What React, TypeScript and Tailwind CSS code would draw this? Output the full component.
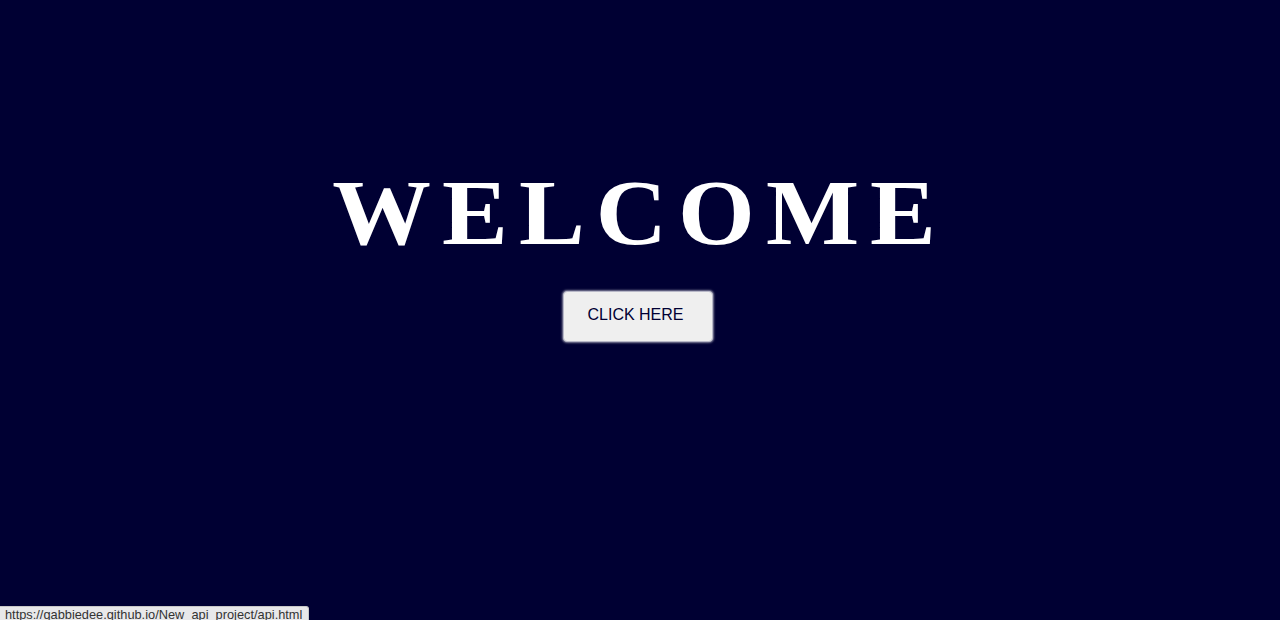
import React from "react";

export default function App() {
  return (
    <div className="relative h-[620px] w-full overflow-hidden bg-[#000033]">
      <div className="flex flex-col items-center pt-[152px]">
        <h1 className="origin-center scale-x-[1.05] font-['Liberation_Serif','Times_New_Roman',serif] text-[94px] font-bold leading-[120px] tracking-[10.5px] text-white">
          WELCOME
        </h1>
        <button className="mt-[19px] mr-[5px] h-[51px] w-[150px] rounded-[4px] border border-[#b8b8c8] bg-[#efefef] pr-[4px] pb-[4px] font-['Liberation_Sans',Arial,sans-serif] text-[16px] text-[#000033] shadow-[0_0_2px_1px_rgba(255,255,255,0.5)]">
          CLICK HERE
        </button>
      </div>
      <div className="absolute bottom-[-4px] left-0 h-[18px] rounded-tr-[3px] border border-l-0 border-[#c8c8c8] bg-[#e8e8ea] pl-[5px] pr-[6px] font-['Liberation_Sans',Arial,sans-serif] text-[12.8px] leading-[16px] text-[#333]">
        https://gabbiedee.github.io/New_api_project/api.html
      </div>
    </div>
  );
}
